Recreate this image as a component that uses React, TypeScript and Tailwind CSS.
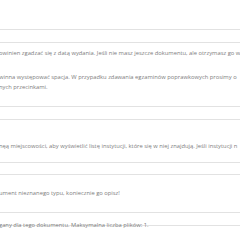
export default function App() {
  const help = "whitespace-nowrap text-[5.8px] leading-[10px] text-[#7d7d7d] -ml-px";
  return (
    <div className="w-[240px] h-[240px] overflow-hidden bg-white font-['Open_Sans',sans-serif]">
      <div className="flex flex-col pt-[29px]">
        <div className="h-[14px] -mx-2 border border-[#e2e2e2] rounded-[2px]" />
        <p className={`${help} mt-[5px]`}>owinien zgadzać się z datą wydania. Jeśli nie masz jeszcze dokumentu, ale otrzymasz go w</p>
        <p className={`${help} mt-[14px]`}>winna występować spacja. W przypadku zdawania egzaminów poprawkowych prosimy o</p>
        <p className={help}>nych przecinkami.</p>
        <div className="h-[14px] -mx-2 border border-[#e2e2e2] rounded-[2px] mt-[14px]" />
        <p className={`${help} mt-[21px]`}>nęą miejscowości, aby wyświetlić listę instytucji, które się w niej znajdują. Jeśli instytucji n</p>
        <div className="h-[13px] -mx-2 border border-[#e2e2e2] rounded-[2px] mt-[11px]" />
        <p className={`${help} mt-[13px]`}>ument nieznanego typu, koniecznie go opisz!</p>
        <div className="h-[14px] -mx-2 border border-[#e2e2e2] rounded-[2px] mt-[14px]" />
        <p className={`${help} mt-[-6px]`}>gany dla tego dokumentu. Maksymalna liczba plików: 1.</p>
      </div>
    </div>
  );
}
